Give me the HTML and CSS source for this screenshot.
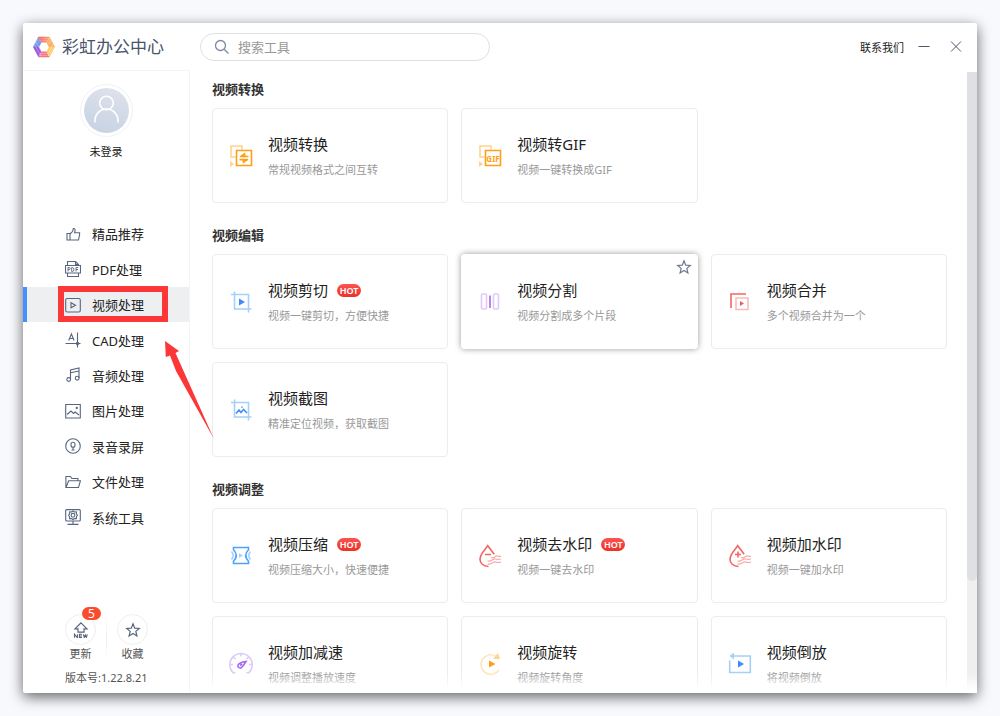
FILE: index.html
```html
<!DOCTYPE html>
<html lang="zh-CN">
<head>
<meta charset="utf-8">
<meta name="viewport" content="width=device-width, initial-scale=1">
<title>彩虹办公中心</title>
<link rel="stylesheet" href="styles.css">
</head>
<body>
<div class="window">
  <header class="topbar">
    <div class="brand">
      <svg class="logo" viewBox="0 0 22 22" aria-hidden="true">
        <defs>
          <linearGradient id="lg1" x1="0" y1="0" x2="1" y2="0"><stop offset="0" stop-color="#f4506e"/><stop offset="1" stop-color="#fda06b"/></linearGradient>
          <linearGradient id="lg2" x1="0" y1="0" x2="0" y2="1"><stop offset="0" stop-color="#8fb4ee"/><stop offset="1" stop-color="#6f8be8"/></linearGradient>
        </defs>
        <path fill="url(#lg1)" d="M5.500.8h11l-2 5.700h-6L4 3.500z"/>
        <path fill="#fcb069" d="M16.500.8 22 11l-6 .5-2.500-5z"/>
        <path fill="#fdcb63" d="M22 11l-5.500 10.200-3-5.700 2.500-4.500z"/>
        <path fill="#f7727a" d="M16.500 21.200h-11l3-5.700h5z"/>
        <path fill="#9c58e0" d="M5.500 21.200 0 11h6l2.500 4.500z"/>
        <path fill="url(#lg2)" d="M0 11 5 1.500l3.500 5L6 11z"/>
        <path stroke="#fff" stroke-width=".6" opacity=".55" d="M6 2.800h11M7 4.800h8M7 17.400h8M6 19.300h10M1.500 8.500l6.500 12M3 6l5.500 10M18 4l-2 4M20 8l-5 10M21 11l-5.500 9"/>
      </svg>
      <h1 class="brand-name">彩虹办公中心</h1>
    </div>
    <label class="search">
      <svg class="search-icon" viewBox="0 0 16 16" aria-hidden="true"><circle cx="6.500" cy="6.500" r="5"/><path d="m10.300 10.500 4.200 4"/></svg>
      <input class="search-input" type="text" placeholder="搜索工具" aria-label="搜索工具">
    </label>
    <div class="window-actions">
      <a class="contact" href="#">联系我们</a>
      <button class="window-button" type="button" aria-label="最小化"><svg viewBox="0 0 12 12"><path d="M0.500 5.500h11"/></svg></button>
      <button class="window-button" type="button" aria-label="关闭"><svg viewBox="0 0 12 12"><path d="m1 .5 10 10M11 .5 1 10.500"/></svg></button>
    </div>
  </header>

  <div class="body">
    <aside class="sidebar">
      <div class="profile">
        <span class="avatar">
          <svg viewBox="0 0 45 45" aria-hidden="true"><circle cx="22.500" cy="15" r="6.800"/><path d="M11 34.500v-2a11.500 11.500 0 0 1 23 0v2"/></svg>
        </span>
        <span class="profile-name">未登录</span>
      </div>

      <nav class="nav">
        <a class="nav-item" href="#"><svg class="nav-icon" viewBox="0 0 16 16"><path d="M2 7.500h3v6.500H2zM5 8l2.700-2.700.6-2.800c2 0 2.200 1.500 1.300 4.200h5v2.100L13.500 14H5"/></svg>精品推荐</a>
        <a class="nav-item" href="#"><svg class="nav-icon" viewBox="0 0 16 16"><path d="M2.500 4.500v-4h8l3 3v1M10.500.5v3h3M2.500 12v3.500h11V12M.5 4.500h15V12H.5z"/><path stroke-width=".9" d="M3 10.500v-4h1.200q1 0 1 1T4.200 8.600H3M6.700 6.500v4h.8q1.400 0 1.400-2t-1.400-2zM11 10.500v-4h2.200M11 8.500h2"/></svg>PDF处理</a>
        <a class="nav-item nav-item-active" href="#"><svg class="nav-icon" viewBox="0 0 16 16"><rect x=".7" y="1.500" width="14.600" height="13.500" rx="1.500"/><path d="M6 5.700v5l4.500-2.500z"/></svg>视频处理<span class="highlight"></span></a>
        <a class="nav-item" href="#"><svg class="nav-icon" viewBox="0 0 16 16"><path d="M.5 11.500h15M12.500.5v15M3.700 8.500l2.700-6.500 2.700 6.500M4.500 6.500h3.800"/><path d="M11 11.500 12.500 10l1.500 1.500-1.500 1.500z" fill="#59657f"/></svg>CAD处理</a>
        <a class="nav-item" href="#"><svg class="nav-icon" viewBox="0 0 16 16"><path d="M5.500 12.500V3l8.500-2v10M5.500 5.800 14 4"/><circle cx="3.700" cy="12.500" r="1.900"/><circle cx="12.200" cy="11.200" r="1.900"/></svg>音频处理</a>
        <a class="nav-item" href="#"><svg class="nav-icon" viewBox="0 0 16 16"><path d="M.7 1.500h14.600v13.500H.7zM2 11.500l4-3.500 2.500 2.500 1.700-1.500L14 12"/><circle cx="11.800" cy="5" r=".6"/></svg>图片处理</a>
        <a class="nav-item" href="#"><svg class="nav-icon" viewBox="0 0 16 16"><circle cx="8" cy="8" r="7.300"/><rect x="6" y="4.300" width="4" height="5" rx="2"/><path d="M8 9.300V12M6.500 12h3"/></svg>录音录屏</a>
        <a class="nav-item" href="#"><svg class="nav-icon" viewBox="0 0 16 16"><path d="M.9 13.500V2.500h4.500l1.500 2h6v2.300M1 13.500l2.700-6.700h11.700L13.500 13.500z"/></svg>文件处理</a>
        <a class="nav-item" href="#"><svg class="nav-icon" viewBox="0 0 16 16"><rect x=".7" y=".6" width="14.600" height="11.400" rx="1"/><path d="M8 12v3M2.500 15.400h11M8 2l1.500 1 1.900-.1v1.900l1 1.500-1 1.500v1.800l-1.900-.1L8 10.500l-1.500-1-1.900.1V7.800l-1-1.500 1-1.500V2.900L6.500 3z"/><circle cx="8" cy="6.300" r="1.900"/></svg>系统工具</a>
      </nav>

      <footer class="sidebar-footer">
        <div class="shortcuts">
          <button class="shortcut" type="button">
            <span class="shortcut-icon"><svg viewBox="0 0 16 16"><path d="M8 .8 14 6.800h-3v3.400H5V6.800H2z"/><path stroke-width="1.100" d="M1.500 15.800v-3.500l3 3.500v-3.500M9 12.300H6.500v3.200H9M6.500 14H9M10.300 12.300l1 3.200 1-2.500 1 2.500 1-3.200"/></svg><span class="badge">5</span></span>
            更新
          </button>
          <button class="shortcut" type="button">
            <span class="shortcut-icon"><svg viewBox="0 0 16 16"><path d="m8 1.800 1.700 4.300 4.600.3-3.500 3 1.100 4.500L8 11.500l-3.900 2.400 1.100-4.500-3.500-3 4.600-.3z"/></svg></span>
            收藏
          </button>
        </div>
        <p class="version">版本号:1.22.8.21</p>
      </footer>
      <svg class="arrow" viewBox="0 0 50 99" aria-hidden="true"><path d="m0 0 14 10-3.500 2L49 98 11 30 5 14.500.8 16z"/></svg>
    </aside>

    <main class="content">
      <section class="group">
        <h2 class="group-title">视频转换</h2>
        <div class="cards">
          <article class="card"><a class="card-link" href="#">
            <svg class="card-icon" viewBox="0 0 24 24"><path class="orange-soft" d="M6.500 13H2V2h11v3.500"/><path class="orange-soft-fill" d="m1 17 4 3-4 3z"/><path class="orange" d="M7.500 6.500h15v15h-15z"/><path class="orange-fill" d="M10.800 13.300h8.700v-1.600h-2.800L16 8.500l-5.200 3.700zM19.200 14.800h-8.700v1.600h2.800l.7 3.200 5.200-3.700z"/></svg>
            <span class="card-text"><span class="card-title">视频转换</span><span class="card-note">常规视频格式之间互转</span></span></a></article>
          <article class="card"><a class="card-link" href="#">
            <svg class="card-icon" viewBox="0 0 24 24"><path class="orange-soft" d="M6.500 13H2V2h11v3.500"/><path class="orange-soft-fill" d="m1 17 4 3-4 3z"/><path class="orange" d="M7.500 6.500h15v15h-15z"/><text class="gif-label" x="15" y="18">GIF</text></svg>
            <span class="card-text"><span class="card-title">视频转GIF</span><span class="card-note">视频一键转换成GIF</span></span></a></article>
        </div>
      </section>

      <section class="group">
        <h2 class="group-title">视频编辑</h2>
        <div class="cards">
          <article class="card"><a class="card-link" href="#">
            <svg class="card-icon" viewBox="0 0 24 24"><path class="blue-soft" d="M2 4.500h17.500v18M5.500 1.500v17.500h17"/><path class="blue-fill" d="M10 8.500v7l6-3.500z"/></svg>
            <span class="card-text"><span class="card-title">视频剪切<span class="hot">HOT</span></span><span class="card-note">视频一键剪切，方便快捷</span></span></a></article>
          <article class="card card-raised"><a class="card-link" href="#">
            <svg class="card-icon" viewBox="0 0 24 24"><rect class="purple-soft" x="3.500" y="4" width="5" height="15" rx="1"/><rect class="purple-soft" x="15.500" y="4" width="5" height="15" rx="1"/><path class="purple" d="M12 5.500v12.500"/></svg>
            <span class="card-text"><span class="card-title">视频分割</span><span class="card-note">视频分割成多个片段</span></span></a>
            <button class="favorite" type="button" aria-label="收藏"><svg viewBox="0 0 16 16"><path d="m8 1.800 1.700 4.300 4.600.3-3.500 3 1.100 4.500L8 11.500l-3.900 2.400 1.100-4.500-3.500-3 4.600-.3z"/></svg></button></article>
          <article class="card"><a class="card-link" href="#">
            <svg class="card-icon" viewBox="0 0 24 24"><path class="red" d="M3 18V4h15"/><path class="red-soft" d="M8 8h12v11.500H8z"/><path class="red-fill" d="M12 11v5l4-2.500z"/></svg>
            <span class="card-text"><span class="card-title">视频合并</span><span class="card-note">多个视频合并为一个</span></span></a></article>
          <article class="card"><a class="card-link" href="#">
            <svg class="card-icon" viewBox="0 0 24 24"><path class="blue-soft" d="M2 4.500h17.500v18M5.500 1.500v17.500h17"/><path class="blue" d="m7 15.500 3-3.500 2 2.500 2.500-3 3.500 3.500M13 8.500v1.200"/></svg>
            <span class="card-text"><span class="card-title">视频截图</span><span class="card-note">精准定位视频，获取截图</span></span></a></article>
        </div>
      </section>

      <section class="group">
        <h2 class="group-title">视频调整</h2>
        <div class="cards">
          <article class="card"><a class="card-link" href="#">
            <svg class="card-icon" viewBox="0 0 24 24"><path class="blue-bright" d="M4.500 3.500h15v2.300q-5.500 5.700 0 11.400v2.300h-15v-2.300q5.500-5.700 0-11.400z"/><path class="blue-soft" d="M2.500 7.500q3.500 3.800 0 8M21.500 7.500q-3.500 3.800 0 8"/><path class="blue-soft-fill" d="M10 9.200v4.700l4-2.300z"/></svg>
            <span class="card-text"><span class="card-title">视频压缩<span class="hot">HOT</span></span><span class="card-note">视频压缩大小，快速便捷</span></span></a></article>
          <article class="card"><a class="card-link" href="#">
            <svg class="card-icon" viewBox="0 0 24 24"><path class="red" d="M10.500 22.500C5 22.500 2 19 2 15.300 2 10 7 6 9.700 1.700l6.500 8.500M7 10.500h6"/><path class="red-wave" d="M13 13.500c3 1.500 4-2 6.500-1.500 1.500.3 2 .5 3.500.3M9.500 17c4 1 5-2.500 8-2 2 .5 3.500.5 5.500 0M9.500 20c4 1 5-2.500 8-2 2 .5 3.500 1 5.500 0"/></svg>
            <span class="card-text"><span class="card-title">视频去水印<span class="hot">HOT</span></span><span class="card-note">视频一键去水印</span></span></a></article>
          <article class="card"><a class="card-link" href="#">
            <svg class="card-icon" viewBox="0 0 24 24"><path class="red" d="M10.500 22.500C5 22.500 2 19 2 15.300 2 10 7 6 9.700 1.700l6.500 8.500M7 10.500h6M10 7.500v6"/><path class="red-wave" d="M13 13.500c3 1.500 4-2 6.500-1.500 1.500.3 2 .5 3.500.3M9.500 17c4 1 5-2.500 8-2 2 .5 3.500.5 5.500 0M9.500 20c4 1 5-2.500 8-2 2 .5 3.500 1 5.500 0"/></svg>
            <span class="card-text"><span class="card-title">视频加水印</span><span class="card-note">视频一键加水印</span></span></a></article>
          <article class="card"><a class="card-link" href="#">
            <svg class="card-icon" viewBox="0 0 24 24"><path class="purple-soft" d="M6.500 20.800H4.300a11.200 11.200 0 1 1 15.400 0h-2.200M12 1.500v3M1 12.500h3M20 12.500h3M4.500 5l2 2M19.500 5l-2 2"/><path class="purple" d="M17 9.500c-4 .5-7 1.500-8 3.500-.8 2.500 2 3.700 3.700 2.300 1.300-1.300 2.300-3 4.300-5.800zM11 13.500l2-1.500"/></svg>
            <span class="card-text"><span class="card-title">视频加减速</span><span class="card-note">视频调整播放速度</span></span></a></article>
          <article class="card"><a class="card-link" href="#">
            <svg class="card-icon" viewBox="0 0 24 24"><path class="orange-pale" d="M18 4.200A9.800 9.800 0 1 0 21 18"/><path class="orange-soft-fill" d="M20 1 22 7H15z"/><path class="orange-fill" d="M11 8.500v7l6.500-3.500z"/></svg>
            <span class="card-text"><span class="card-title">视频旋转</span><span class="card-note">视频旋转角度</span></span></a></article>
          <article class="card"><a class="card-link" href="#">
            <svg class="card-icon" viewBox="0 0 24 24"><path class="blue-soft" d="M1.700 8.500v12h20.600V4H4.500"/><path class="blue-soft-fill" d="M6 .5v7L1.500 4z"/><path class="blue-fill" d="M10 8.500v7l6-3.500z"/></svg>
            <span class="card-text"><span class="card-title">视频倒放</span><span class="card-note">将视频倒放</span></span></a></article>
        </div>
      </section>
    </main>
    <div class="scrollbar" aria-hidden="true"><div class="scrollbar-thumb"></div></div>
  </div>
</div>
</body>
</html>
```

FILE: styles.css
```css
* { box-sizing: border-box; }

body {
  margin: 0;
  padding: 23px;
  height: 100vh;
  background: #f7f9fd;
  color: #222;
  font-family: "Noto Sans", "Noto Sans CJK SC", sans-serif;
  font-size: 13px;
}

h1, h2, p { margin: 0; font-weight: 400; }
a { color: inherit; text-decoration: none; }
button { padding: 0; border: 0; background: none; color: inherit; font: inherit; cursor: pointer; }
svg { fill: none; }

.window {
  display: flex;
  flex-direction: column;
  height: 100%;
  background: #fff;
  border-radius: 2px;
  box-shadow: 0 4px 14px rgba(0, 0, 0, .6);
}

/* Top bar */
.topbar { display: flex; align-items: center; height: 47px; padding: 0 15px 0 10px; }
.brand { display: flex; align-items: center; gap: 7px; width: 167px; }
.logo { width: 22px; height: 22px; }
.brand-name { color: #4a526b; font-size: 17px; line-height: 24px; }

.search {
  display: flex;
  align-items: center;
  gap: 8px;
  width: 290px;
  height: 28px;
  padding: 0 13px;
  border: 1px solid #dfe0e3;
  border-radius: 14px;
}
.search-icon { width: 16px; height: 16px; stroke: #7c88a3; stroke-width: 1.3; }
.search-input { flex: 1; min-width: 0; padding: 0; border: 0; outline: 0; background: none; font: inherit; }
.search-input::placeholder { color: #999; }

.window-actions { display: flex; align-items: center; gap: 14px; margin-left: auto; }
.contact { font-size: 11px; }
.window-button { display: flex; width: 12px; height: 12px; }
.window-button svg { width: 12px; height: 12px; stroke: #4e5668; }
.window-button + .window-button { margin-left: 6px; }

.body { position: relative; display: flex; flex: 1; min-height: 0; }

/* Sidebar */
.sidebar {
  position: relative;
  display: flex;
  flex-direction: column;
  width: 167px;
  border-top: 1px solid #f3f4f6;
  border-right: 1px solid #f3f4f6;
}
.profile { display: flex; flex-direction: column; align-items: center; gap: 7px; height: 145px; padding-top: 13px; font-size: 11px; }
.avatar {
  width: 53px;
  height: 53px;
  padding: 3px;
  border: 1px solid #eef1f6;
  border-radius: 50%;
}
.avatar svg {
  display: block;
  width: 100%;
  border-radius: 50%;
  background: linear-gradient(15deg, #c5d1e2, #e0e3ec);
  stroke: #fff;
  stroke-width: 1.600;
}
.profile-name { line-height: 16px; }

.nav { display: grid; grid-auto-rows: 1fr; height: 319px; }
.nav-item { position: relative; display: flex; align-items: center; gap: 11px; padding-left: 42px; border-left: 0 solid #4490ff; }
.nav-item-active { padding-left: 38px; border-left-width: 4px; background: #eeeff1; }
.nav-icon { width: 16px; height: 16px; stroke: #59657f; stroke-width: 1.1; }
.highlight { position: absolute; inset: -1px 21px 0 31px; border: 6px solid #fc3737; }
.arrow { position: absolute; z-index: 2; left: 142px; top: 270px; width: 50px; height: 99px; fill: #fc3737; pointer-events: none; }

.sidebar-footer { margin-top: auto; padding: 0 41px 7px 42px; color: #555; font-size: 11px; }
.shortcuts { display: flex; gap: 21px; }
.shortcut { display: flex; flex-direction: column; align-items: center; gap: 1px; line-height: 16px; position: relative; }
.shortcut + .shortcut::before { content: ""; position: absolute; left: -11px; top: 0; bottom: 0; width: 1px; background: linear-gradient(#fff, #eee, #fff); }
.shortcut-icon { position: relative; display: grid; place-items: center; width: 31px; height: 31px; border: 1px solid #eee; border-radius: 50%; }
.shortcut-icon svg { width: 16px; height: 16px; stroke: #59657f; stroke-width: 1.2; }
.badge {
  position: absolute;
  top: -8px;
  right: -6px;
  width: 19px;
  border-radius: 7px;
  background: #fa4b2d;
  color: #fff;
  font-size: 12px;
  line-height: 13px;
  text-align: center;
}
.version { margin-top: 8px; line-height: 16px; white-space: nowrap; }

/* Tool list */
.content {
  position: relative;
  display: flex;
  flex: 1;
  flex-direction: column;
  gap: 22px;
  min-width: 0;
  padding: 9px 20px 0 22px;
  overflow: hidden;
}
.body::after {
  content: "";
  position: absolute;
  left: 167px;
  right: 0;
  bottom: 0;
  height: 20px;
  background: linear-gradient(rgba(255, 255, 255, 0), #fff 85%);
  pointer-events: none;
}
.group-title { margin-bottom: 9px; font-size: 13px; line-height: 20px; font-weight: 700; color: #333; }
.cards { display: grid; grid-template-columns: repeat(3, minmax(0, 1fr)); gap: 13px; }
.card { position: relative; border: 1px solid #ececee; border-radius: 4px; }
.card-raised { border-color: #fff; box-shadow: 0 0 6px rgba(0, 0, 0, .4); }
.card-link { display: flex; align-items: center; gap: 15px; padding: 25px 16px 24px; }
.card-icon { flex: none; width: 24px; height: 24px; stroke-width: 1.6; }
.card-text { display: flex; flex-direction: column; gap: 8px; min-width: 0; }
.card-title { display: flex; align-items: center; gap: 9px; font-size: 15px; line-height: 20px; }
.card-note { color: #999; font-size: 11px; line-height: 16px; }
.hot {
  width: 24px;
  border-radius: 7px;
  background: linear-gradient(#fb5450, #ec3129);
  color: #fff;
  font-size: 9px;
  line-height: 13px;
  font-weight: 600;
  text-align: center;
}
.favorite { position: absolute; top: 4px; right: 5px; width: 16px; height: 16px; }
.favorite svg { display: block; stroke: #6b7690; stroke-width: 1.2; }

/* Icon colours */
.orange { stroke: #ff9f15; }
.orange-soft { stroke: #ffd391; }
.orange-pale { stroke: #ffe5bd; }
.orange-fill { fill: #ff9f15; }
.orange-soft-fill { fill: #ffd391; }
.gif-label { fill: #ff9f15; font: 700 8px "Noto Sans", sans-serif; text-anchor: middle; }
.blue { stroke: #468ffb; }
.blue-bright { stroke: #4da3fb; }
.blue-soft { stroke: #a6d0fc; }
.blue-fill { fill: #3f8afc; }
.blue-soft-fill { fill: #a6d0fc; }
.purple { stroke: #a768ee; }
.purple-soft { stroke: #dfcbf8; }
.red { stroke: #f26661; }
.red-soft { stroke: #f9bcbc; }
.red-wave { stroke: #f8aaa8; stroke-width: 1.2; }
.red-fill { fill: #f05a5e; }

/* Scrollbar */
.scrollbar { width: 10px; margin-top: 2px; background: #efefef; }
.scrollbar-thumb { height: 82%; border-radius: 0 0 5px 5px; background: #dfe0e4; }
```
